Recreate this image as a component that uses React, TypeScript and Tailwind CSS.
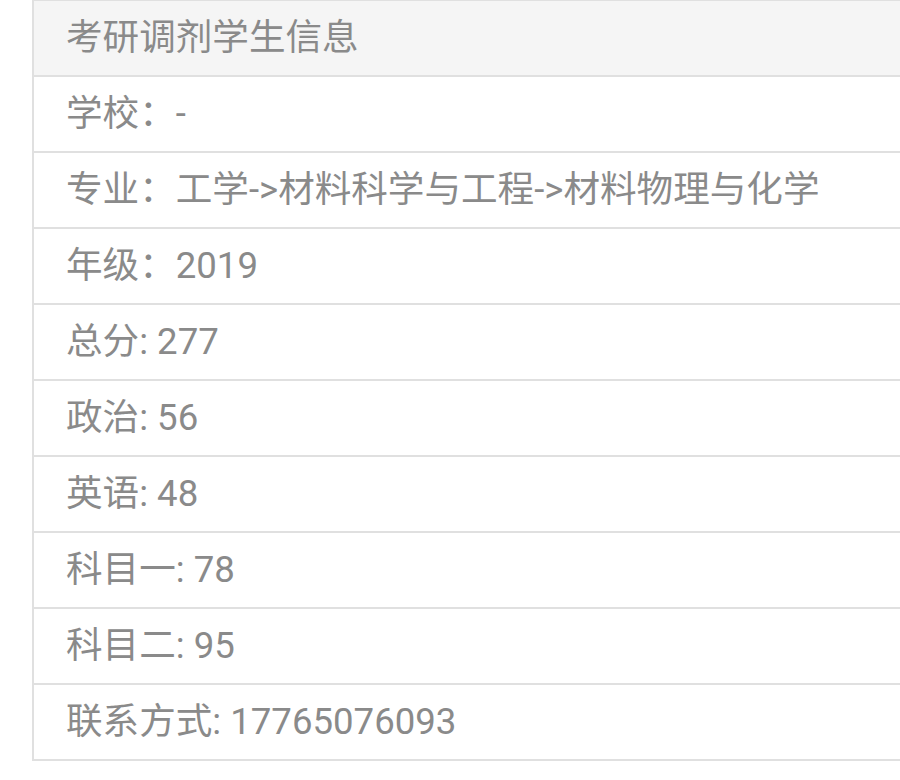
const rows = [
  "学校：-",
  "专业：工学->材料科学与工程->材料物理与化学",
  "年级：2019",
  "总分: 277",
  "政治: 56",
  "英语: 48",
  "科目一: 78",
  "科目二: 95",
  "联系方式: 17765076093",
];

export default function App() {
  return (
    <div
      className="w-[900px] h-[780px] overflow-hidden bg-white"
      style={{ fontFamily: 'Roboto, "Noto Sans CJK SC", sans-serif' }}
    >
      <div className="ml-[32px] w-[900px] border-2 border-[#e0e0e0] text-[36.6px] text-[#8a8a8a] -mt-[1px]">
        <div className="h-[74px] flex items-center px-[32px] bg-[#f5f5f5]">
          考研调剂学生信息
        </div>
        {rows.map((r) => (
          <div
            key={r}
            className="h-[76px] flex items-center px-[32px] border-t-2 border-[#e0e0e0]"
          >
            {r}
          </div>
        ))}
      </div>
    </div>
  );
}
